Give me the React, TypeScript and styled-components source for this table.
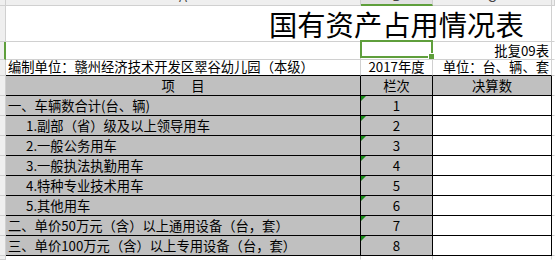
import React from 'react'
import styled, { createGlobalStyle, css } from 'styled-components'

const GRID = '#d0d0d0'
const INK = '#000000'
const FILL = '#c0c0c0'
const GREEN = '#5f9f3c'

const GlobalStyle = createGlobalStyle`
  html, body {
    margin: 0;
    padding: 0;
    background: #ffffff;
  }
  body {
    font-family: "Noto Sans CJK SC", "Noto Sans", sans-serif;
    color: #000;
  }
`

const Sheet = styled.div`
  display: grid;
  grid-template-columns: 6px 355px 72px 119px 1fr;
  grid-template-rows: 6px 36px 18px 16px repeat(9, 20px) 1fr;
  width: 555px;
  height: 260px;
  overflow: hidden;
`

const Corner = styled.div`
  background: #efefef;
  border-right: 1px solid ${GRID};
  border-bottom: 1px solid ${GRID};
  box-sizing: border-box;
`

const ColHead = styled.div<{ $selected?: boolean }>`
  display: flex;
  justify-content: center;
  align-items: flex-end;
  overflow: hidden;
  box-sizing: border-box;
  background: ${(p) => (p.$selected ? '#e2e2e2' : '#efefef')};
  border-right: 1px solid ${GRID};
  border-bottom: ${(p) => (p.$selected ? `2px solid ${GREEN}` : `1px solid ${GRID}`)};
`

const ColLetter = styled.span`
  font-family: "Liberation Sans", Arial, sans-serif;
  font-size: 12px;
  line-height: 12px;
  color: #444;
  transform: translateY(-1px);
`

const RowHead = styled.div<{ $selected?: boolean }>`
  background: #efefef;
  box-sizing: border-box;
  border-bottom: 1px solid ${GRID};
  border-right: ${(p) => (p.$selected ? `2px solid ${GREEN}` : `1px solid ${GRID}`)};
`

type CellProps = {
  $span?: number
  $fill?: boolean
  $align?: 'left' | 'center' | 'right'
  $rb?: string
  $bb?: string
  $indent?: number
  $valign?: 'center' | 'flex-end'
}

const Cell = styled.div<CellProps>`
  position: relative;
  display: flex;
  align-items: ${(p) => p.$valign ?? 'center'};
  justify-content: ${(p) =>
    p.$align === 'center' ? 'center' : p.$align === 'right' ? 'flex-end' : 'flex-start'};
  box-sizing: border-box;
  min-width: 0;
  padding: 0 ${(p) => (p.$align === 'right' ? '2px' : '0')} 0 ${(p) => p.$indent ?? 0}px;
  ${(p) => p.$span && css`grid-column: span ${p.$span};`}
  background: ${(p) => (p.$fill ? FILL : '#ffffff')};
  border-right: 1px solid ${(p) => p.$rb ?? GRID};
  border-bottom: 1px solid ${(p) => p.$bb ?? GRID};
  font-size: 13.3px;
  line-height: 16px;
  white-space: pre;
  overflow: visible;
`

const Title = styled(Cell)`
  font-size: 28.3px;
  line-height: 34px;
  padding-left: 263px;
  padding-top: 1px;
  letter-spacing: 0;
`

const SelectedCell = styled(Cell)`
  &::after {
    content: '';
    position: absolute;
    left: -1px;
    top: -2px;
    width: 73px;
    height: 18px;
    box-sizing: border-box;
    border: 2.5px solid ${GREEN};
  }
  &::before {
    content: '';
    position: absolute;
    right: -2px;
    bottom: 0px;
    width: 5px;
    height: 5px;
    background: ${GREEN};
    border: 1px solid #fff;
    border-width: 1px 0 0 1px;
    z-index: 1;
  }
`

const NumberCell = styled(Cell)`
  &::before {
    content: '';
    position: absolute;
    left: 0;
    top: 0;
    width: 0;
    height: 0;
    border-top: 5px solid #168a16;
    border-right: 5px solid transparent;
  }
`

const rows: { label: string; indent: number }[] = [
  { label: '一、车辆数合计(台、辆)', indent: 2 },
  { label: '1.副部（省）级及以上领导用车', indent: 20 },
  { label: '2.一般公务用车', indent: 20 },
  { label: '3.一般执法执勤用车', indent: 20 },
  { label: '4.特种专业技术用车', indent: 20 },
  { label: '5.其他用车', indent: 20 },
  { label: '二、单价50万元（含）以上通用设备（台，套）', indent: 2 },
  { label: '三、单价100万元（含）以上专用设备（台，套）', indent: 2 },
]

export default function App() {
  return (
    <>
      <GlobalStyle />
      <Sheet>
        <Corner />
        <ColHead><ColLetter>A</ColLetter></ColHead>
        <ColHead $selected><ColLetter>B</ColLetter></ColHead>
        <ColHead><ColLetter>C</ColLetter></ColHead>
        <ColHead />

        <RowHead />
        <Title $span={3}>国有资产占用情况表</Title>
        <Cell $rb="transparent" />

        <RowHead $selected />
        <Cell />
        <SelectedCell />
        <Cell $align="right" $valign="flex-end">批复09表</Cell>
        <Cell $rb="transparent" />

        <RowHead />
        <Cell $indent={2} $bb={INK} $valign="flex-end">编制单位：赣州经济技术开发区翠谷幼儿园（本级）</Cell>
        <Cell $align="center" $bb={INK} $valign="flex-end">2017年度</Cell>
        <Cell $align="right" $bb={INK} $valign="flex-end">单位：台、辆、套</Cell>
        <Cell $rb="transparent" />

        <RowHead />
        <Cell $fill $align="center" $rb={INK} $bb={INK}>项　 目</Cell>
        <Cell $fill $align="center" $rb={INK} $bb={INK}>栏次</Cell>
        <Cell $fill $align="center" $rb={INK} $bb={INK}>决算数</Cell>
        <Cell $rb="transparent" />

        {rows.map((r, i) => (
          <React.Fragment key={i}>
            <RowHead />
            <Cell $fill $indent={r.indent} $rb={INK} $bb={INK}>{r.label}</Cell>
            <NumberCell $fill $align="center" $rb={INK} $bb={INK}>{i + 1}</NumberCell>
            <Cell $rb={INK} $bb={INK} />
            <Cell $rb="transparent" />
          </React.Fragment>
        ))}

        <RowHead />
        <Cell $bb="transparent" />
        <Cell $bb="transparent" />
        <Cell $bb="transparent" />
        <Cell $rb="transparent" $bb="transparent" />
      </Sheet>
    </>
  )
}
